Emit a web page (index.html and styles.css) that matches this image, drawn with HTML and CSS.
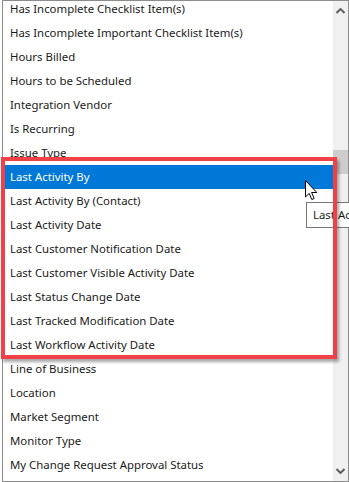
FILE: index.html
```html
<!DOCTYPE html>
<html lang="en">
  <head>
    <meta charset="UTF-8" />
    <title>Field list</title>
    <link rel="stylesheet" href="styles.css">
  </head>
  <body>
    <div class="listbox">
      <ul class="items">
        <li>Has Incomplete Checklist Item(s)</li>
        <li>Has Incomplete Important Checklist Item(s)</li>
        <li>Hours Billed</li>
        <li>Hours to be Scheduled</li>
        <li>Integration Vendor</li>
        <li>Is Recurring</li>
        <li>Issue Type</li>
        <li class="valgt">Last Activity By</li>
        <li>Last Activity By (Contact)</li>
        <li>Last Activity Date</li>
        <li>Last Customer Notification Date</li>
        <li>Last Customer Visible Activity Date</li>
        <li>Last Status Change Date</li>
        <li>Last Tracked Modification Date</li>
        <li>Last Workflow Activity Date</li>
        <li>Line of Business</li>
        <li>Location</li>
        <li>Market Segment</li>
        <li>Monitor Type</li>
        <li>My Change Request Approval Status</li>
      </ul>
      <div class="scrollbar">
        <svg class="pil" width="9" height="6" viewBox="0 0 9 6"><path d="M0.5 5 L4.5 1 L8.5 5" fill="none" stroke="#606060" stroke-width="2"/></svg>
        <div class="spor"><div class="thumb"></div></div>
        <svg class="pil" width="9" height="6" viewBox="0 0 9 6"><path d="M0.5 1 L4.5 5 L8.5 1" fill="none" stroke="#606060" stroke-width="2"/></svg>
      </div>
    </div>

    <div class="tooltip">Last Activity By</div>
    <div class="markering"></div>

    <svg class="cursor" width="13" height="21" viewBox="0 0 13 21">
      <path d="M0.5 0.5 L0.5 17 L4.2 13.4 L6.8 19.5 L9.2 18.5 L6.6 12.5 L11.8 12.5 Z" fill="#fff" stroke="#000" stroke-width="1" stroke-linejoin="miter"/>
    </svg>
  </body>
</html>
```
FILE: styles.css
```css
body {
  margin: 0;
  background: #fff;
  font-family: "Noto Sans", "Open Sans", sans-serif;
  font-size: 11.4px;
  color: #1a1a1a;
  overflow: hidden;
}

.listbox {
  margin-left: 2px;
  width: 345px;
  height: 480px;
  border: 1px solid #8c8c8c;
  display: flex;
  overflow: hidden;
  background: #fff;
}

.items {
  list-style: none;
  margin: -4px 0 0 0;
  padding: 0;
  flex: 1;
}

.items li {
  height: 24px;
  line-height: 24px;
  padding-left: 7px;
  white-space: nowrap;
}

.valgt {
  background-color: #0078d7;
  color: #fff;
}

.scrollbar {
  width: 15px;
  background: #f0f0f0;
  display: flex;
  flex-direction: column;
  align-items: center;
}

.pil {
  margin: 7px 0;
}

.spor {
  flex: 1;
  align-self: stretch;
}

.thumb {
  margin-top: 129px;
  height: 24px;
  background: #cdcdcd;
}

/* annotation and pointer lie over the list */
.tooltip {
  position: absolute;
  left: 306px;
  top: 202px;
  width: 48px;
  height: 24px;
  line-height: 24px;
  padding-left: 6px;
  border: 1px solid #767676;
  background: #fff;
  white-space: nowrap;
  overflow: hidden;
}

.markering {
  position: absolute;
  left: 1px;
  top: 157px;
  width: 328px;
  height: 194px;
  border: 4px solid #ef4147;
  box-shadow: 2px 3px 3px rgba(0, 0, 0, 0.35);
}

.cursor {
  position: absolute;
  left: 305px;
  top: 180px;
}
```
